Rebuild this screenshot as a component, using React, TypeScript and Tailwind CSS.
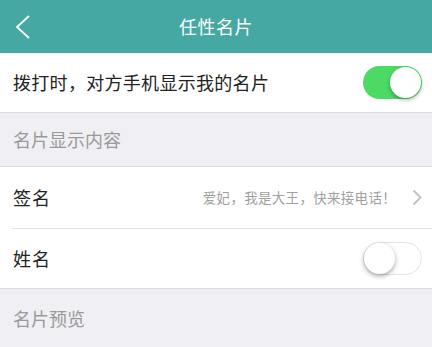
import React from "react";

function Toggle({ on }: { on: boolean }) {
  return (
    <div
      className={
        on
          ? "relative w-[59px] h-[33px] rounded-full bg-[#4cd964]"
          : "relative w-[59px] h-[33px] rounded-full bg-white border border-[#e3e3e3]"
      }
    >
      <div
        className={
          on
            ? "absolute top-[1px] right-[1px] w-[31px] h-[31px] rounded-full bg-white shadow-[0_2px_4px_rgba(0,0,0,0.3)]"
            : "absolute top-0 left-0 w-[31px] h-[31px] rounded-full bg-white shadow-[0_2px_5px_rgba(0,0,0,0.35)]"
        }
      />
    </div>
  );
}

export default function App() {
  return (
    <div
      className="w-[432px] h-[347px] overflow-hidden bg-[#efeff4] flex flex-col"
      style={{ fontFamily: '"Noto Sans CJK SC", "Noto Sans", sans-serif' }}
    >
      <div className="h-[53px] bg-[#46a8a2] flex items-center relative shrink-0">
        <svg className="absolute left-[15px] top-[15px]" width="16" height="24" viewBox="0 0 16 24">
          <path d="M14 1 L2 12 L14 23" fill="none" stroke="white" strokeWidth="1.8" />
        </svg>
        <div className="flex-1 text-center text-white text-[18px] tracking-[0.5px]">任性名片</div>
      </div>
      <div className="h-[60px] bg-white flex items-center justify-between pl-[13px] pr-[10px] border-b border-[#dcdcdc] shrink-0">
        <span className="text-[18px] text-[#222] tracking-[0.3px]">拨打时，对方手机显示我的名片</span>
        <Toggle on />
      </div>
      <div className="h-[54px] flex items-center pl-[13px] text-[18px] text-[#9a9a9a] border-b border-[#dcdcdc] shrink-0">
        名片显示内容
      </div>
      <div className="bg-white shrink-0">
        <div className="h-[61px] flex items-center justify-between pl-[13px] pr-[10px]">
          <span className="text-[18px] text-[#222] tracking-[1px]">签名</span>
          <div className="flex items-center">
            <span className="text-[13.5px] text-[#a0a0a0] tracking-[0.3px]">爱妃，我是大王，快来接电话！</span>
            <svg className="ml-[16px]" width="10" height="17" viewBox="0 0 10 17">
              <path d="M1.5 1.5 L8.5 8.5 L1.5 15.5" fill="none" stroke="#c4c4c8" strokeWidth="2" />
            </svg>
          </div>
        </div>
        <div className="ml-[12px] h-px bg-[#e2e2e2]" />
        <div className="h-[60px] flex items-center justify-between pl-[13px] pr-[10px] border-b border-[#dcdcdc]">
          <span className="text-[18px] text-[#222] tracking-[1px]">姓名</span>
          <Toggle on={false} />
        </div>
      </div>
      <div className="h-[58px] flex items-center pl-[13px] text-[18px] text-[#9a9a9a] shrink-0">
        名片预览
      </div>
    </div>
  );
}
